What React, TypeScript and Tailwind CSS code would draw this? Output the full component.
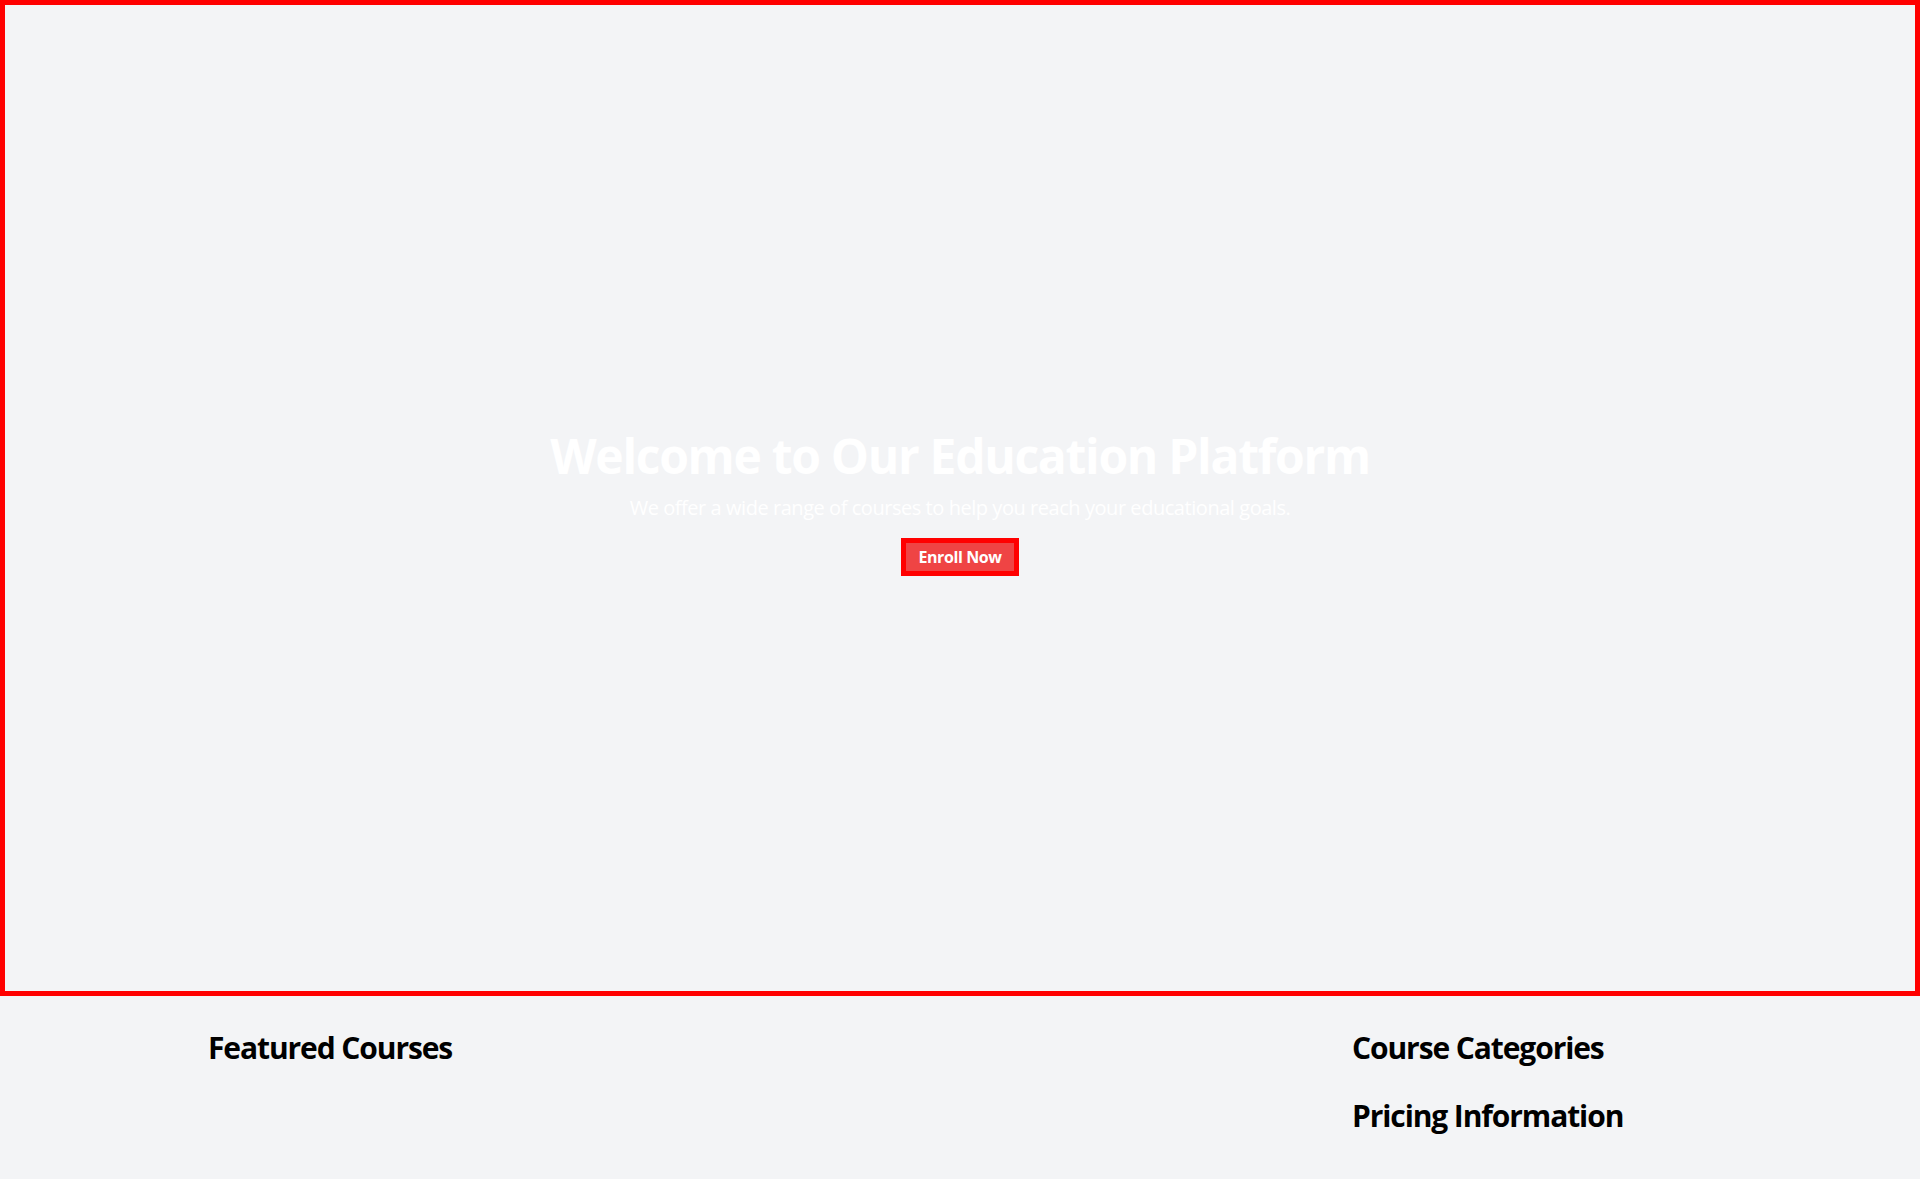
export default function App() {
  return (
    <div
      className="min-h-screen bg-[#f3f4f6] text-black"
      style={{ fontFamily: '"Open Sans", "Noto Sans", sans-serif' }}
    >
      <section className="h-[996px] pt-[5px] border-[5px] border-[#ff0000] flex flex-col items-center justify-center text-center text-white">
        <h1 className="text-5xl font-bold leading-tight tracking-[-1.3px]">Welcome to Our Education Platform</h1>
        <p className="text-xl mt-2 tracking-[-0.45px]">We offer a wide range of courses to help you reach your educational goals.</p>
        <button className="mt-4 border-[5px] border-[#ff0000] bg-[#ef4444] px-3 py-0.5 text-base font-bold tracking-[-0.4px] text-white">
          Enroll Now
        </button>
      </section>

      <div className="container mx-auto px-4 pt-[34px] pb-8 flex">
        <div className="flex-1">
          <h2 className="text-3xl font-bold tracking-[-1.1px]">Featured Courses</h2>
        </div>
        <div className="w-[360px]">
          <h2 className="text-3xl font-bold tracking-[-1.1px]">Course Categories</h2>
          <h2 className="text-3xl font-bold tracking-[-1.1px] mt-8">Pricing Information</h2>
        </div>
      </div>
    </div>
  )
}
